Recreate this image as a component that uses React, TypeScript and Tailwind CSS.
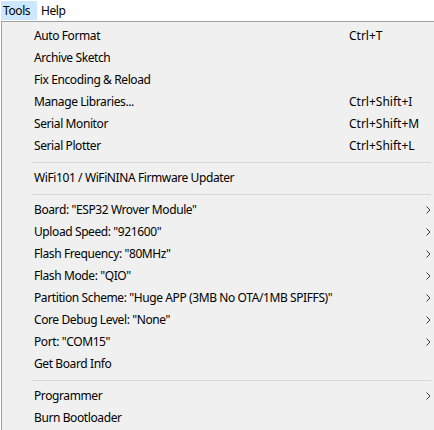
import React from "react";

type Item =
  | { kind: "item"; label: string; shortcut?: string; sub?: boolean }
  | { kind: "sep" };

const items: Item[] = [
  { kind: "item", label: "Auto Format", shortcut: "Ctrl+T" },
  { kind: "item", label: "Archive Sketch" },
  { kind: "item", label: "Fix Encoding & Reload" },
  { kind: "item", label: "Manage Libraries...", shortcut: "Ctrl+Shift+I" },
  { kind: "item", label: "Serial Monitor", shortcut: "Ctrl+Shift+M" },
  { kind: "item", label: "Serial Plotter", shortcut: "Ctrl+Shift+L" },
  { kind: "sep" },
  { kind: "item", label: "WiFi101 / WiFiNINA Firmware Updater" },
  { kind: "sep" },
  { kind: "item", label: 'Board: "ESP32 Wrover Module"', sub: true },
  { kind: "item", label: 'Upload Speed: "921600"', sub: true },
  { kind: "item", label: 'Flash Frequency: "80MHz"', sub: true },
  { kind: "item", label: 'Flash Mode: "QIO"', sub: true },
  { kind: "item", label: 'Partition Scheme: "Huge APP (3MB No OTA/1MB SPIFFS)"', sub: true },
  { kind: "item", label: 'Core Debug Level: "None"', sub: true },
  { kind: "item", label: 'Port: "COM15"', sub: true },
  { kind: "item", label: "Get Board Info" },
  { kind: "sep" },
  { kind: "item", label: "Programmer", sub: true },
  { kind: "item", label: "Burn Bootloader" },
];

function Chevron() {
  return (
    <svg width="5" height="8" viewBox="0 0 5 8" className="block">
      <polyline points="0.5,0.5 4,4 0.5,7.5" fill="none" stroke="#3c3c3c" strokeWidth="1" />
    </svg>
  );
}

export default function App() {
  return (
    <div
      className="w-[434px] h-[430px] overflow-hidden bg-white text-[12px] tracking-[-0.4px] text-black"
      style={{ fontFamily: '"Noto Sans", "Segoe UI", sans-serif' }}
    >
      <div className="h-[21px] flex items-stretch pt-[1px] bg-white">
        <div className="w-[36px] h-[19px] ml-[1px] bg-[#cce8ff] flex items-center pl-[2px] leading-none">Tools</div>
        <div className="h-[19px] flex items-center pl-[4px] leading-none">Help</div>
      </div>
      <div className="h-[409px] ml-[1px] border-t border-l border-[#a0a0a0] bg-[#f0f0f0] pt-[3px]">
        {items.map((it, i) =>
          it.kind === "sep" ? (
            <div key={i} className="h-[10px] flex items-center pl-[30px] pr-[3px]">
              <div className="h-px w-full bg-[#d7d7d7]" />
            </div>
          ) : (
            <div key={i} className="h-[22px] flex items-center leading-none">
              <div className="w-[347px] pl-[32px] whitespace-nowrap">{it.label}</div>
              <div className="flex-1 whitespace-nowrap tracking-normal">{it.shortcut ?? ""}</div>
              {it.sub ? (
                <div className="w-[8px] flex justify-start">
                  <Chevron />
                </div>
              ) : null}
            </div>
          )
        )}
      </div>
    </div>
  );
}
